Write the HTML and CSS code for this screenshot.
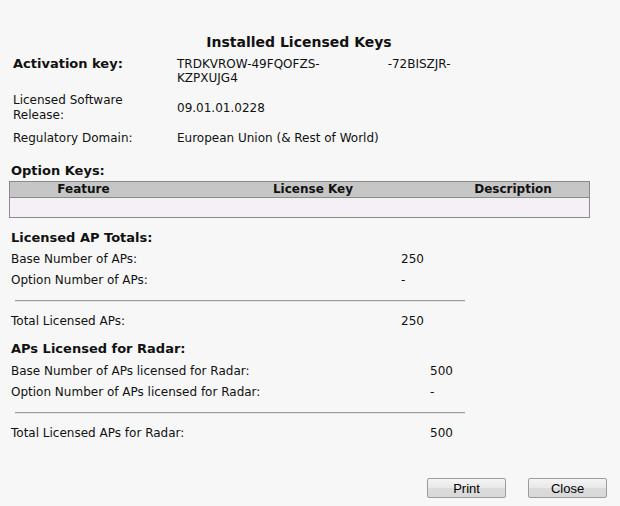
FILE: index.html
```html
<!DOCTYPE html>
<html>
<head>
<meta charset="utf-8">
<title>Installed Licensed Keys</title>
<link rel="stylesheet" href="styles.css">
</head>
<body>
<div class="page">
  <h1 class="title">Installed Licensed Keys</h1>

  <div class="info">
    <div class="label strong">Activation key:</div>
    <div class="value key">TRDKVROW-49FQOFZS-<span class="gap"></span>-72BISZJR-<br>KZPXUJG4</div>

    <div class="label two">Licensed Software<br>Release:</div>
    <div class="value mid">09.01.01.0228</div>

    <div class="label">Regulatory Domain:</div>
    <div class="value">European Union (&amp; Rest of World)</div>
  </div>

  <h2 class="section-title opt">Option Keys:</h2>
  <div class="keys">
    <div class="keys-head">
      <div class="col c1">Feature</div>
      <div class="col c2">License Key</div>
      <div class="col c3">Description</div>
    </div>
    <div class="keys-row"></div>
  </div>

  <h2 class="section-title sec">Licensed AP Totals:</h2>
  <div class="totals t1">
    <div>Base Number of APs:</div><div>250</div>
    <div>Option Number of APs:</div><div>-</div>
  </div>
  <hr class="rule">
  <div class="totals t1">
    <div>Total Licensed APs:</div><div>250</div>
  </div>

  <h2 class="section-title sec2">APs Licensed for Radar:</h2>
  <div class="totals t2">
    <div>Base Number of APs licensed for Radar:</div><div>500</div>
    <div>Option Number of APs licensed for Radar:</div><div>-</div>
  </div>
  <hr class="rule">
  <div class="totals t2">
    <div>Total Licensed APs for Radar:</div><div>500</div>
  </div>

  <div class="actions">
    <button class="btn">Print</button>
    <button class="btn">Close</button>
  </div>
</div>
</body>
</html>
```

FILE: styles.css
```css
html, body {
  margin: 0;
  padding: 0;
  background: #f7f7f7;
}
body {
  font-family: "DejaVu Sans", Verdana, sans-serif;
  font-size: 12px;
  color: #111;
  width: 620px;
  height: 506px;
  overflow: hidden;
}
.page {
  padding-top: 33px;
}
.title {
  margin: 0;
  width: 598px;
  text-align: center;
  font-size: 14px;
  font-weight: bold;
  line-height: 18px;
}
.info {
  margin: 6px 0 0 13px;
  display: grid;
  grid-template-columns: 164px auto;
  row-gap: 8px;
}
.label, .value {
  line-height: 15px;
}
.strong {
  font-weight: bold;
  font-size: 13px;
  line-height: 14px;
}
.key {
  line-height: 14px;
}
.gap {
  display: inline-block;
  width: 68px;
}
.mid {
  align-self: center;
}
.section-title {
  margin: 0;
  margin-left: 11px;
  font-size: 13px;
  font-weight: bold;
  line-height: 16px;
}
.opt {
  margin-top: 17px;
  margin-bottom: 2px;
}
.keys {
  margin-left: 9px;
  width: 579px;
  border: 1px solid #8a8a8a;
}
.keys-head {
  display: grid;
  grid-template-columns: 147px 312px 120px;
  background: #c6c6c6;
  border-bottom: 1px solid #8a8a8a;
  font-weight: bold;
  line-height: 15px;
}
.col { text-align: center; }
.c3 { padding-right: 32px; }
.keys-row {
  height: 19px;
  background: #f5f0f6;
}
.sec {
  margin-top: 11px;
  margin-bottom: 2px;
  line-height: 18px;
}
.sec2 {
  margin-top: 8px;
  margin-bottom: 3px;
  line-height: 18px;
}
.totals {
  margin-left: 11px;
  display: grid;
  line-height: 21px;
}
.t1 { grid-template-columns: 390px auto; }
.t2 { grid-template-columns: 419px auto; }
.rule {
  margin: 9px 0 9px 15px;
  width: 450px;
  height: 0;
  border: 0;
  border-top: 1px solid #9a9a9a;
  border-bottom: 1px solid #e6e6e6;
}
.actions {
  position: absolute;
  top: 478px;
  right: 13px;
  display: flex;
  gap: 22px;
}
.btn {
  width: 79px;
  height: 20px;
  padding: 0;
  border: 1px solid #9c9c9c;
  border-radius: 2px;
  background: linear-gradient(#f4f4f4, #e8e8e8 50%, #dcdcdc 51%, #d8d8d8);
  font-family: "Liberation Sans", Arial, sans-serif;
  font-size: 13px;
  color: #000;
}
```
